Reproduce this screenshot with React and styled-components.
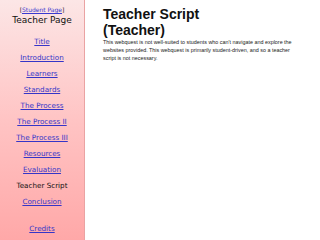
import React from "react";
import styled, { createGlobalStyle } from "styled-components";

const GlobalStyle = createGlobalStyle`
  html, body {
    margin: 0;
    padding: 0;
    background: #ffffff;
  }
  body {
    font-family: "DejaVu Sans", "Liberation Sans", sans-serif;
  }
`;

const Page = styled.div`
  display: flex;
  width: 320px;
  height: 240px;
  overflow: hidden;
`;

const Sidebar = styled.nav`
  width: 85px;
  flex-shrink: 0;
  border-right: 1px solid #eaa3a3;
  background: linear-gradient(to bottom, #fce6e6 0%, #ffc4c4 50%, #ffa8a8 100%);
  display: flex;
  flex-direction: column;
  align-items: center;
  padding-top: 6px;
  box-sizing: border-box;
`;

const StudentLink = styled.div`
  font-size: 6px;
  line-height: 8px;
  color: #222;
  a {
    color: #3a3ad0;
  }
`;

const SideTitle = styled.div`
  font-size: 9px;
  line-height: 13px;
  color: #111;
  margin-bottom: 7px;
`;

const NavItem = styled.a`
  font-size: 7.2px;
  line-height: 16px;
  color: ${(props) => (props.$current ? "#111" : "#3535c8")};
  text-decoration: ${(props) => (props.$current ? "none" : "underline")};
  margin-top: ${(props) => (props.$gap ? "11px" : "0")};
`;

const Main = styled.main`
  flex: 1;
  padding: 6px 0 0 18px;
  color: #111;
`;

const Heading = styled.h1`
  margin: 0;
  font-family: "Liberation Sans", Arial, sans-serif;
  font-size: 14px;
  line-height: 16px;
  font-weight: bold;
`;

const Text = styled.p`
  margin: 0;
  width: 196px;
  font-family: "Liberation Sans", Arial, sans-serif;
  font-size: 5.4px;
  line-height: 8px;
  color: #222;
`;

const links = [
  "Title",
  "Introduction",
  "Learners",
  "Standards",
  "The Process",
  "The Process II",
  "The Process III",
  "Resources",
  "Evaluation",
];

export default function App() {
  return (
    <>
      <GlobalStyle />
      <Page>
        <Sidebar>
          <StudentLink>
            [<a href="#">Student Page</a>]
          </StudentLink>
          <SideTitle>Teacher Page</SideTitle>
          {links.map((l) => (
            <NavItem key={l} href="#">
              {l}
            </NavItem>
          ))}
          <NavItem $current>Teacher Script</NavItem>
          <NavItem href="#">Conclusion</NavItem>
          <NavItem href="#" $gap>
            Credits
          </NavItem>
        </Sidebar>
        <Main>
          <Heading>
            Teacher Script
            <br />
            (Teacher)
          </Heading>
          <Text>
            This webquest is not well-suited to students who can't navigate and
            explore the websites provided. This webquest is primarily
            student-driven, and so a teacher script is not necessary.
          </Text>
        </Main>
      </Page>
    </>
  );
}
